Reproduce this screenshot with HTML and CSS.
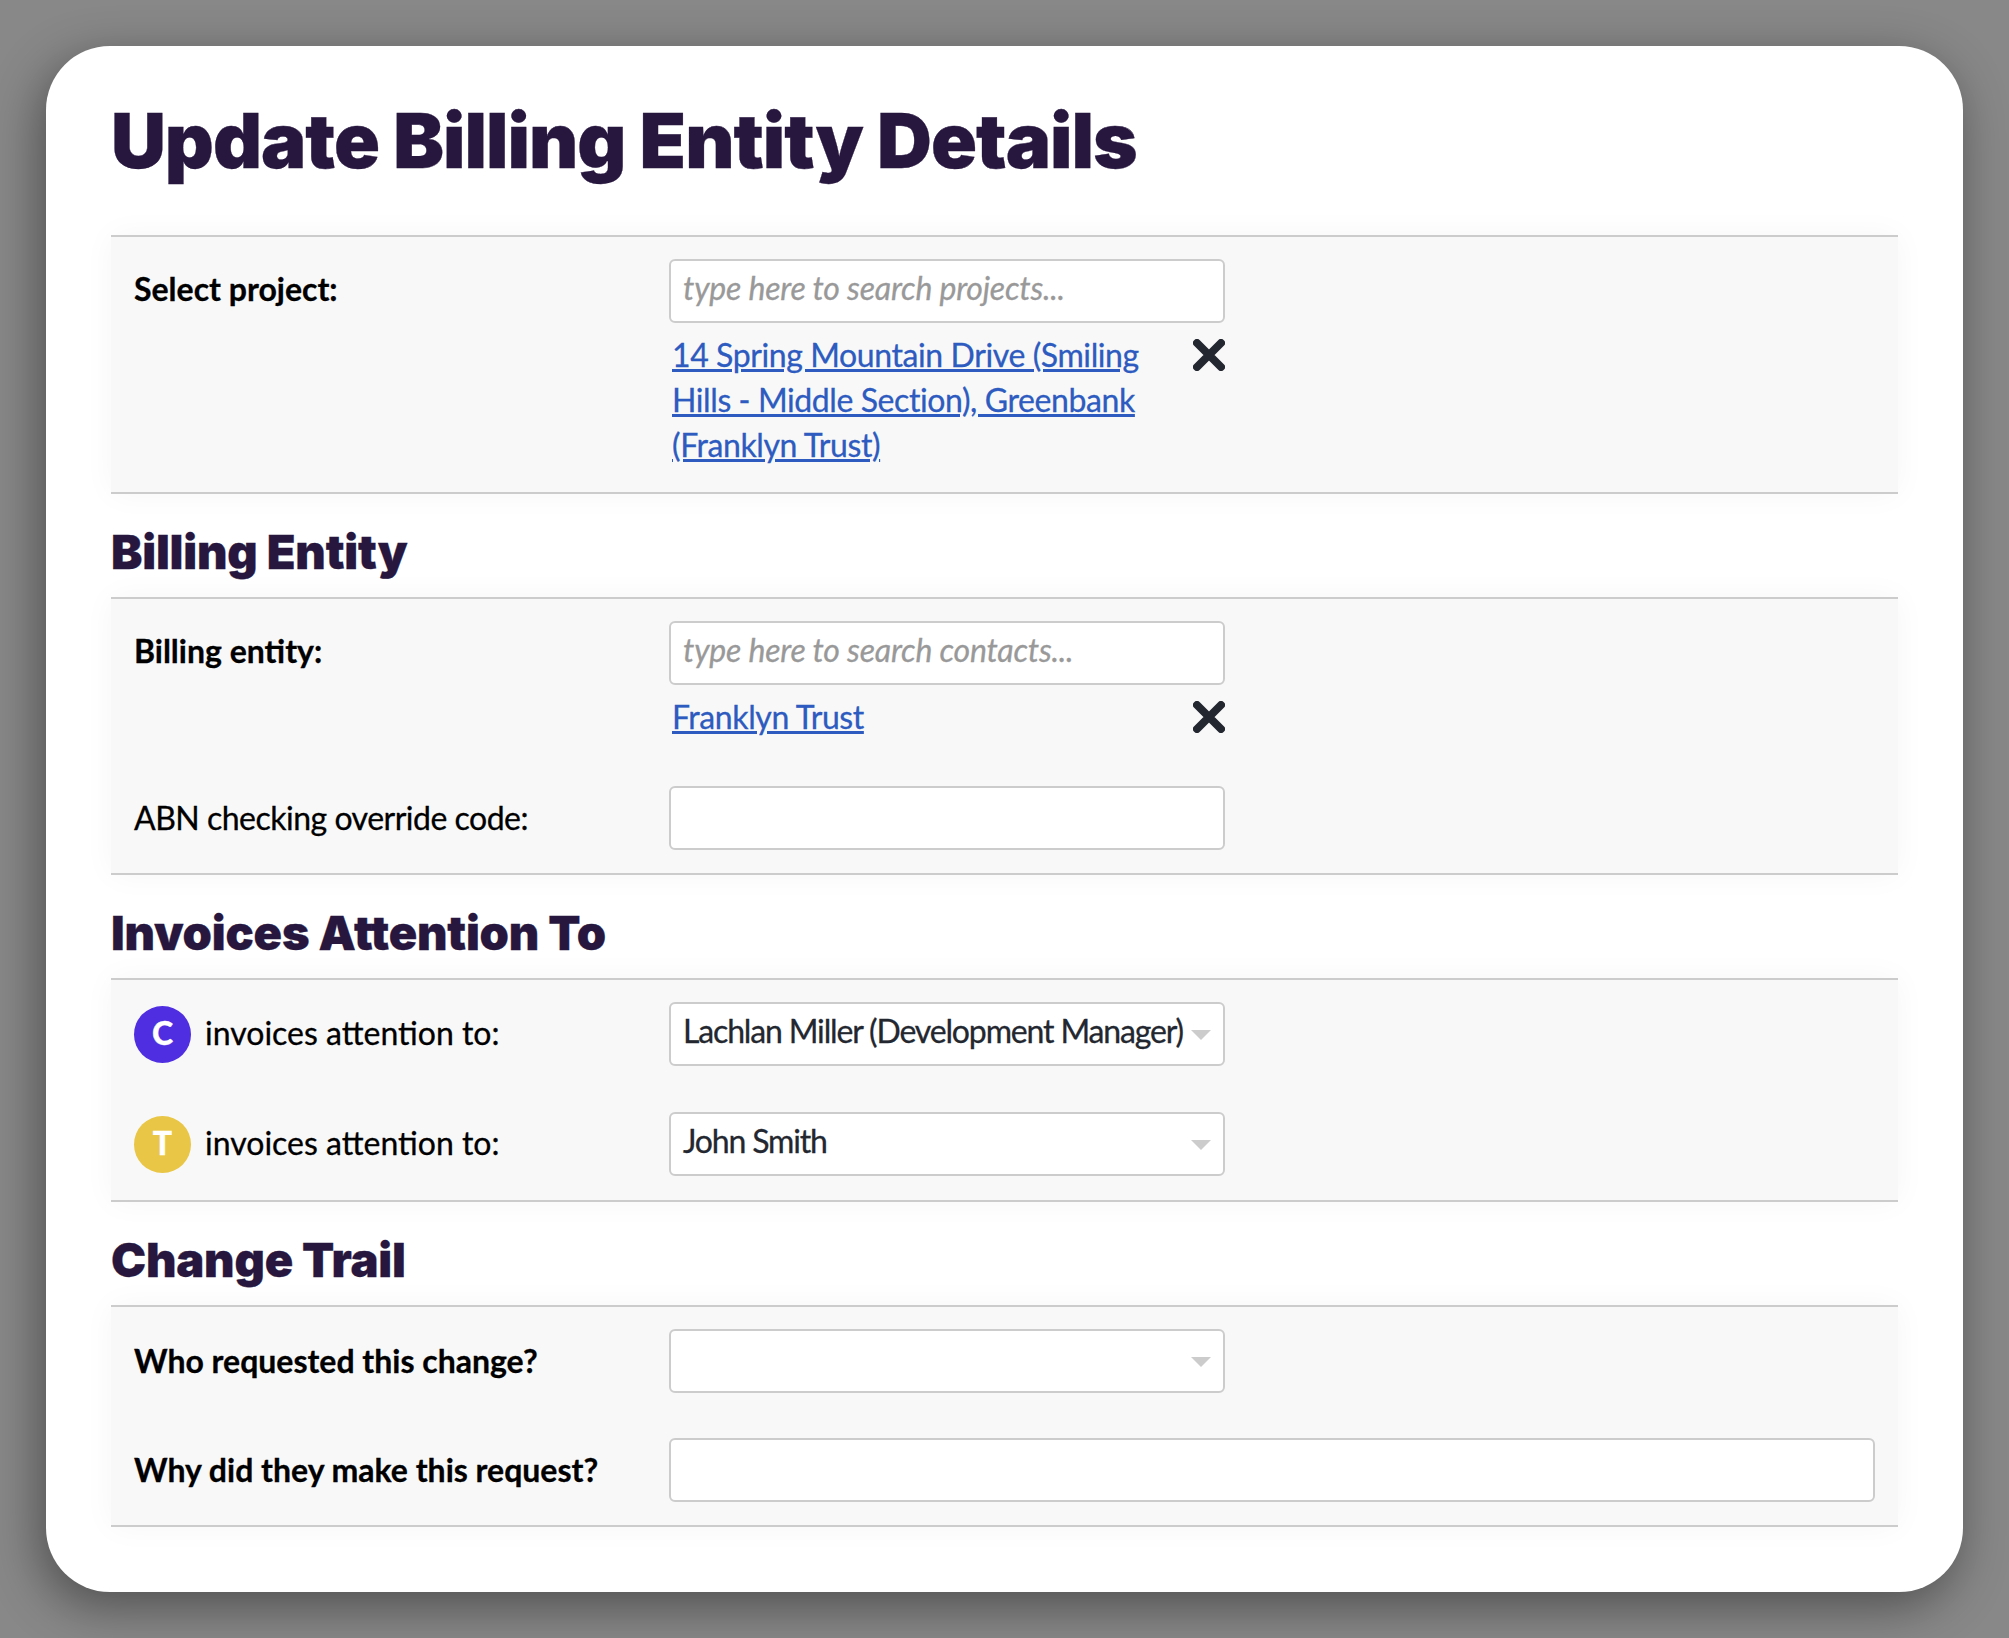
FILE: index.html
```html
<!DOCTYPE html>
<html lang="en">
<head>
<meta charset="utf-8">
<title>Update Billing Entity Details</title>
<link rel="stylesheet" href="styles.css">
</head>
<body>
<main class="card">
  <h1 class="title">Update Billing Entity Details</h1>

  <section class="panel panel-roomy">
    <div class="row">
      <div class="label strong">Select project:</div>
      <div class="control">
        <div class="field placeholder">type here to search projects...</div>
        <div class="picked">
          <a class="link" href="#">14 Spring Mountain Drive (Smiling Hills - Middle Section), Greenbank (Franklyn Trust)</a>
          <svg class="remove" viewBox="0 0 32 32"><path d="M4 4 28 28M28 4 4 28"/></svg>
        </div>
      </div>
    </div>
  </section>

  <h2 class="heading">Billing Entity</h2>
  <section class="panel">
    <div class="row">
      <div class="label strong">Billing entity:</div>
      <div class="control">
        <div class="field placeholder">type here to search contacts...</div>
        <div class="picked">
          <a class="link" href="#">Franklyn Trust</a>
          <svg class="remove" viewBox="0 0 32 32"><path d="M4 4 28 28M28 4 4 28"/></svg>
        </div>
      </div>
    </div>
    <div class="row centered">
      <div class="label tight">ABN checking override code:</div>
      <div class="control"><div class="field"></div></div>
    </div>
  </section>

  <h2 class="heading">Invoices Attention To</h2>
  <section class="panel panel-roomy">
    <div class="row centered">
      <div class="label with-avatar"><span class="avatar avatar-c">C</span><span class="label-text">invoices attention to:</span></div>
      <div class="control"><div class="field select">Lachlan Miller (Development Manager)</div></div>
    </div>
    <div class="row centered">
      <div class="label with-avatar"><span class="avatar avatar-t">T</span><span class="label-text">invoices attention to:</span></div>
      <div class="control"><div class="field select">John Smith</div></div>
    </div>
  </section>

  <h2 class="heading">Change Trail</h2>
  <section class="panel panel-snug">
    <div class="row centered">
      <div class="label strong">Who requested this change?</div>
      <div class="control"><div class="field select"></div></div>
    </div>
    <div class="row centered">
      <div class="label strong">Why did they make this request?</div>
      <div class="control wide"><div class="field"></div></div>
    </div>
  </section>
</main>
</body>
</html>
```
FILE: styles.css
```css
* { box-sizing: border-box; }
html, body { height: 100%; }
body {
  margin: 0;
  padding: 46px;
  background: #888;
  font-family: "Lato", sans-serif;
  font-size: 32px;
  line-height: 45px;
  color: #000;
  overflow: hidden;
  -webkit-text-stroke: 0.3px currentColor;
}
.card {
  height: 1546px;
  padding: 47px 65px 0;
  background: #fff;
  border-radius: 64px;
  box-shadow: -6px 14px 50px rgba(0, 0, 0, 0.42);
}
.title {
  margin: 0 0 48px;
  font-family: "Inter", sans-serif;
  font-weight: 900;
  font-size: 76px;
  line-height: 94px;
  letter-spacing: -1px;
  color: #27173f;
}
.heading {
  margin: 0;
  height: 103px;
  padding-top: 29px;
  font-family: "Inter", sans-serif;
  font-weight: 900;
  font-size: 47px;
  line-height: 58px;
  letter-spacing: -0.2px;
  color: #27173f;
}
.panel {
  display: flex;
  flex-direction: column;
  gap: 46px;
  padding: 22px 23px 23px;
  background: #f8f8f8;
  border-top: 2px solid #ccc;
  border-bottom: 2px solid #ccc;
  box-shadow: 0 0 30px rgba(0, 0, 0, 0.04);
}
.panel-roomy { padding-bottom: 24px; }
.panel-snug { gap: 45px; }
.row { display: flex; align-items: flex-start; }
.row.centered { align-items: center; }
.label { width: 535px; flex: none; }
.row.centered > .label:not(.with-avatar) { padding-bottom: 2px; }
.tight { letter-spacing: -0.5px; }
.strong { font-weight: 700; padding-top: 7px; }
.row.centered .strong { padding-top: 0; }
.control { width: 556px; }
.control.wide { width: 1206px; }
.field {
  position: relative;
  height: 64px;
  padding: 4px 12px;
  background: #fff;
  border: 2px solid #ccc;
  border-radius: 6px;
  color: #23272f;
  letter-spacing: -1.15px;
}
.placeholder { color: #999; font-style: italic; letter-spacing: -0.2px; }
.select::after {
  content: "";
  position: absolute;
  right: 12px;
  top: 26px;
  border-left: 10px solid transparent;
  border-right: 10px solid transparent;
  border-top: 10px solid #ccc;
}
.picked {
  display: flex;
  justify-content: space-between;
  align-items: flex-start;
  margin-top: 9px;
  padding: 0 0 1px 3px;
}
.link { width: 480px; color: #2d5bbf; letter-spacing: -0.4px; }
.remove {
  flex: none;
  width: 32px;
  height: 32px;
  margin-top: 7px;
  fill: none;
  stroke: #23272f;
  stroke-width: 8;
  stroke-linecap: round;
}
.with-avatar { display: flex; align-items: center; gap: 14px; }
.label-text { padding-bottom: 3px; }
.avatar {
  flex: none;
  width: 57px;
  height: 57px;
  border-radius: 50%;
  text-align: center;
  line-height: 54px;
  color: #fff;
  font-weight: 900;
}
.avatar-c { background: #4f2de0; }
.avatar-t { background: #e9c645; }
```
